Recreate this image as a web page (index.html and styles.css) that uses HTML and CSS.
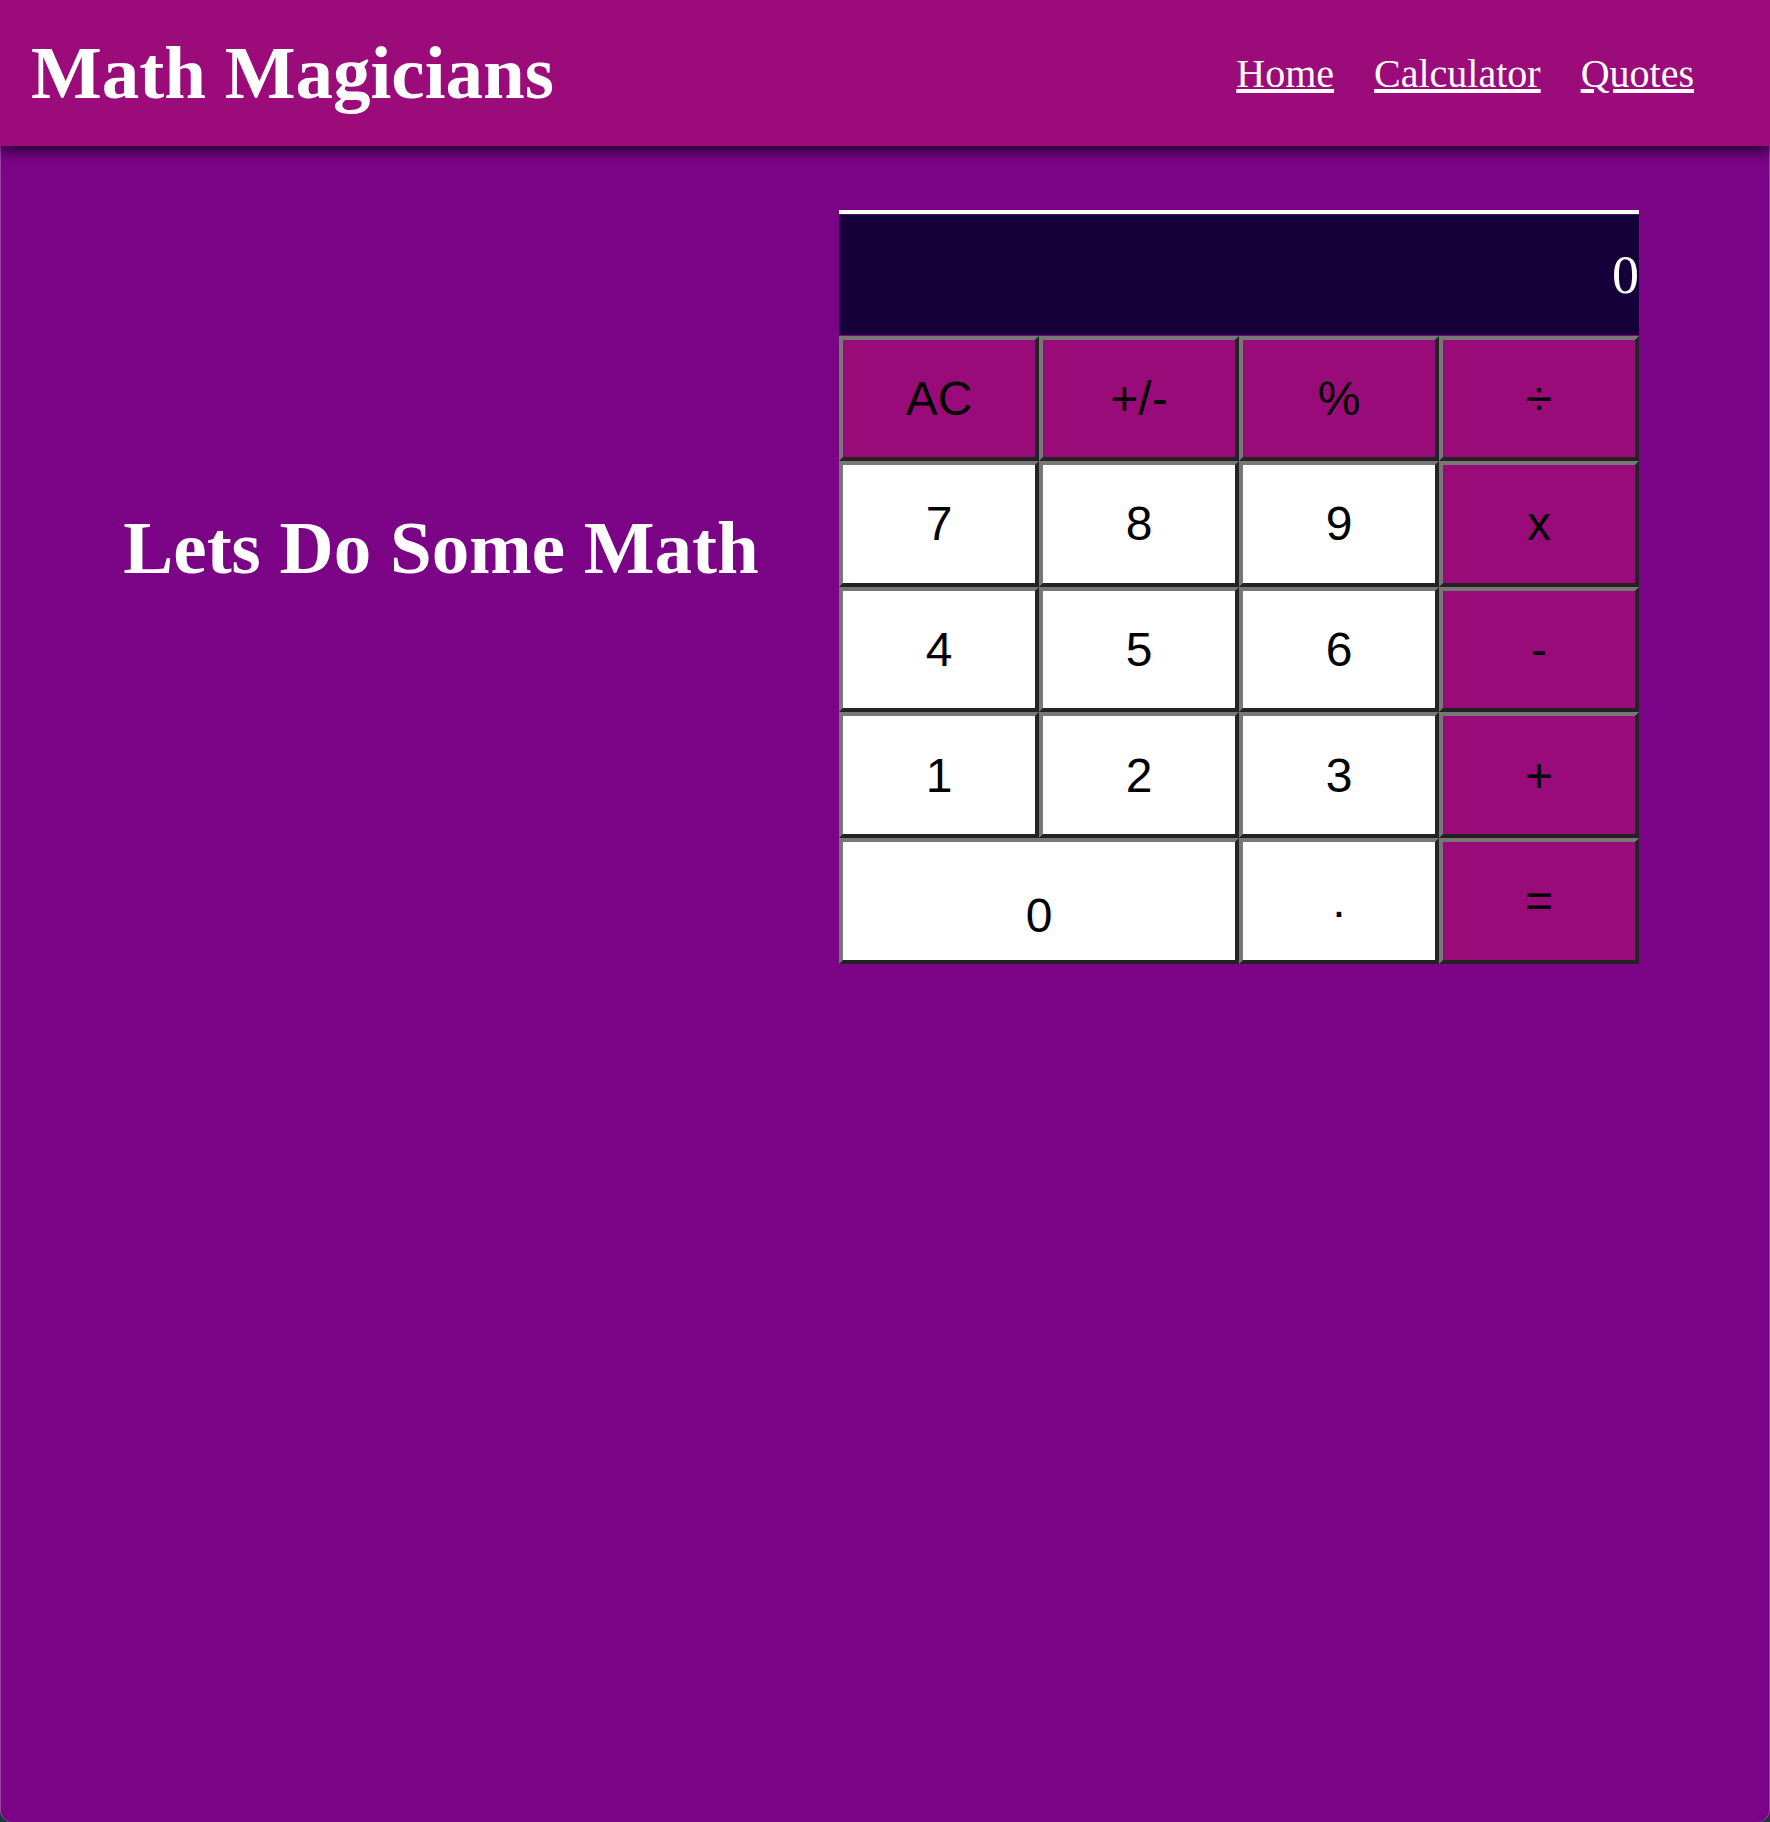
FILE: index.html
```html
<!DOCTYPE html>
<html lang="en">
<head>
<meta charset="utf-8">
<title>Math Magicians</title>
<link rel="stylesheet" href="styles.css">
</head>
<body>
<header class="topbar">
  <h1 class="brand">Math Magicians</h1>
  <nav class="nav">
    <a href="#" class="nav-link">Home</a>
    <a href="#" class="nav-link">Calculator</a>
    <a href="#" class="nav-link">Quotes</a>
  </nav>
</header>
<main class="page">
  <section class="intro">
    <h2 class="intro-title">Lets Do Some Math</h2>
  </section>
  <div class="calc">
    <div class="display">0</div>
    <button class="key op">AC</button>
    <button class="key op">+/-</button>
    <button class="key op">%</button>
    <button class="key op">÷</button>
    <button class="key">7</button>
    <button class="key">8</button>
    <button class="key">9</button>
    <button class="key op">x</button>
    <button class="key">4</button>
    <button class="key">5</button>
    <button class="key">6</button>
    <button class="key op">-</button>
    <button class="key">1</button>
    <button class="key">2</button>
    <button class="key">3</button>
    <button class="key op">+</button>
    <button class="key wide">0</button>
    <button class="key">.</button>
    <button class="key op">=</button>
  </div>
</main>
</body>
</html>
```

FILE: styles.css
```css
html {
  background: #173c3a;
}
body {
  margin: 0;
  min-height: 100vh;
  background: #7a0485;
  font-family: "Liberation Serif", "Times New Roman", serif;
  color: #fff;
  border-radius: 0 0 12px 12px;
  box-shadow: inset 1px 0 0 rgba(255,255,255,0.25), inset -1px 0 0 rgba(255,255,255,0.25);
  display: flex;
  flex-direction: column;
}
.topbar {
  height: 146px;
  box-sizing: border-box;
  background: #9b0c7a;
  display: flex;
  align-items: center;
  justify-content: space-between;
  padding: 0 76px 0 31px;
  box-shadow: 0 5px 12px rgba(25, 0, 45, 0.9);
  position: relative;
  z-index: 1;
}
.brand {
  margin: 0;
  font-size: 75px;
  font-weight: bold;
}
.nav {
  display: flex;
  gap: 40px;
}
.nav-link {
  color: #fff;
  font-size: 40px;
  text-decoration: underline;
}
.page {
  display: flex;
  padding: 64px 131px 0 43px;
}
.intro {
  flex: 1;
  text-align: center;
}
.intro-title {
  margin: 295px 0 0;
  font-size: 75px;
  font-weight: bold;
}
.calc {
  width: 800px;
  display: grid;
  grid-template-columns: repeat(4, 200px);
  grid-auto-rows: 125.6px;
}
.display {
  grid-column: 1 / -1;
  height: 121px;
  border-top: 4px solid #fff;
  box-shadow: inset 0 1px 0 #3c1a5c;
  background: #16003a;
  display: flex;
  align-items: center;
  justify-content: flex-end;
  font-size: 54px;
  font-family: "Liberation Serif", "Times New Roman", serif;
}
.key {
  margin: 0;
  padding: 0;
  background: #fff;
  color: #000;
  font-family: "Liberation Sans", Arial, sans-serif;
  font-size: 48px;
  border: 4px solid;
  border-color: #777 #232323 #232323 #777;
}
.key.op {
  background: #990b79;
}
.key.wide {
  grid-column: span 2;
  padding-top: 30px;
}
```
